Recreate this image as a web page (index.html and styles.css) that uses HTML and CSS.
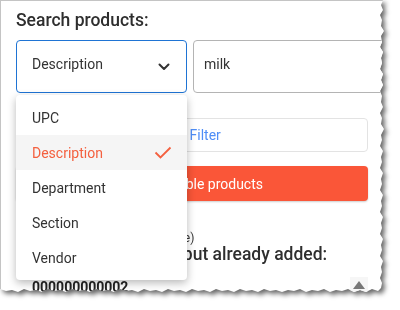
FILE: index.html
```html
<!DOCTYPE html>
<html lang="en">
<head>
    <meta charset="UTF-8">
    <meta name="viewport" content="width=device-width, initial-scale=1.0">
    <title>Search products</title>
    <link rel="stylesheet" href="styles.css">
</head>
<body>

    <div class="sheet">
        <div class="paper">
            <h2 class="title">Search products:</h2>

            <!-- Search row -->
            <div class="search-row">
                <div class="select">
                    <span>Description</span>
                    <svg class="chevron" width="12" height="8" viewBox="0 0 12 8">
                        <path d="M1.5 1.5 L6 6 L10.5 1.5" fill="none" stroke="#333" stroke-width="2" stroke-linecap="round" stroke-linejoin="round"/>
                    </svg>
                </div>
                <input class="query" type="text" value="milk">
            </div>

            <button class="filter-btn">Add Filter</button>
            <button class="add-btn">Add available products</button>

            <p class="hint">(click on each product to remove)</p>
            <h3 class="subtitle">Products were found but already added:</h3>
            <div class="upc">000000000002</div>

            <button class="to-top">
                <svg width="12" height="8" viewBox="0 0 12 8"><path d="M6 0 L12 8 L0 8 Z" fill="#777"/></svg>
            </button>

            <!-- Open dropdown -->
            <ul class="menu">
                <li>UPC</li>
                <li class="selected">Description
                    <svg width="18" height="13" viewBox="0 0 18 13">
                        <path d="M1.5 6.5 L6.5 11.5 L16.5 1.5" fill="none" stroke="#f4603f" stroke-width="1.8"/>
                    </svg>
                </li>
                <li>Department</li>
                <li>Section</li>
                <li>Vendor</li>
            </ul>
        </div>
    </div>

</body>
</html>
```

FILE: styles.css
```css
body {
    margin: 0;
    background-color: #fff;
    font-family: 'Roboto', 'Liberation Sans', sans-serif;
    color: #333;
}

.sheet {
    width: 400px;
    height: 310px;
    filter: drop-shadow(3px 3px 2.5px rgba(0, 0, 0, 0.6));
}

.paper {
    position: relative;
    width: 384px;
    height: 294px;
    box-sizing: border-box;
    background-color: #fff;
    border-top: 1px solid #c4c4c4;
    border-left: 1px solid #c4c4c4;
    padding: 9px 0 0 15px;
    overflow: hidden;
    clip-path: polygon(0 0, 383px 0, 381px 5px, 383px 10px, 380px 15px, 382px 20px, 381px 26px, 384px 31px, 381px 36px, 382px 42px, 380px 47px, 383px 52px, 381px 58px, 382px 63px, 380px 69px, 383px 74px, 381px 80px, 383px 85px, 380px 91px, 382px 96px, 381px 102px, 383px 107px, 380px 113px, 382px 118px, 381px 124px, 384px 129px, 381px 135px, 382px 140px, 380px 146px, 383px 151px, 381px 157px, 382px 162px, 380px 168px, 383px 173px, 381px 179px, 382px 184px, 380px 190px, 383px 195px, 381px 201px, 382px 206px, 380px 212px, 383px 217px, 381px 223px, 382px 228px, 380px 234px, 383px 239px, 381px 245px, 382px 250px, 380px 256px, 383px 261px, 381px 267px, 382px 272px, 380px 278px, 382px 283px, 381px 288px, 378px 291px, 372px 289px, 366px 292px, 360px 290px, 354px 292px, 348px 289px, 342px 291px, 336px 290px, 330px 292px, 324px 289px, 318px 291px, 312px 290px, 306px 292px, 300px 289px, 294px 291px, 288px 290px, 282px 292px, 276px 290px, 270px 291px, 264px 289px, 258px 292px, 252px 290px, 246px 291px, 240px 289px, 234px 292px, 228px 290px, 222px 291px, 216px 289px, 210px 292px, 204px 290px, 198px 291px, 192px 289px, 186px 292px, 180px 290px, 174px 291px, 168px 289px, 162px 292px, 156px 290px, 150px 291px, 144px 289px, 138px 292px, 132px 290px, 126px 291px, 120px 289px, 114px 292px, 108px 290px, 102px 291px, 96px 289px, 90px 292px, 84px 290px, 78px 291px, 72px 289px, 66px 292px, 60px 290px, 54px 291px, 48px 289px, 42px 292px, 36px 290px, 30px 291px, 24px 289px, 18px 292px, 12px 290px, 6px 291px, 0 289px);
}

.title {
    margin: 0 0 10px;
    font-size: 17.5px;
    line-height: 20px;
    font-weight: 500;
    color: #2e2e2e;
}

.search-row {
    display: flex;
    gap: 6px;
    width: 400px;
}

.select {
    width: 171px;
    height: 53px;
    box-sizing: border-box;
    border: 1px solid #1f74d4;
    border-radius: 4px;
    padding: 0 16px 5px 15px;
    display: flex;
    align-items: center;
    justify-content: space-between;
    font-size: 14px;
}

.chevron {
    margin-top: 5px;
}

.query {
    width: 200px;
    height: 53px;
    box-sizing: border-box;
    border: 1px solid #b4b4b4;
    border-radius: 4px;
    padding: 0 10px 5px;
    font-family: inherit;
    font-size: 14px;
    color: #333;
}

.filter-btn,
.add-btn {
    display: block;
    width: 352px;
    border-radius: 4px;
    font-family: inherit;
    font-size: 14px;
}

.filter-btn {
    margin-top: 25px;
    height: 34px;
    padding-left: 4px;
    background-color: #fff;
    border: 1px solid #e3e3e3;
    color: #4f8ef7;
}

.add-btn {
    margin-top: 14px;
    height: 35px;
    border: none;
    background-color: #fa5638;
    color: #fff;
    box-shadow: 0 1px 2px rgba(0, 0, 0, 0.2);
}

.hint {
    margin: 31px 0 0;
    font-size: 12px;
    line-height: 12px;
}

.subtitle {
    margin: 0;
    font-size: 17.5px;
    line-height: 20px;
    font-weight: 500;
    color: #2e2e2e;
}

.upc {
    margin: 15px 0 0 16px;
    font-size: 14px;
    font-weight: 700;
    color: #222;
}

.to-top {
    position: absolute;
    left: 349px;
    top: 276px;
    width: 18px;
    height: 16px;
    padding: 0;
    border: none;
    background-color: #f6f6f6;
    display: flex;
    align-items: center;
    justify-content: center;
}

.menu {
    position: absolute;
    left: 15px;
    top: 94px;
    width: 171px;
    margin: 0;
    padding: 5px 0;
    list-style: none;
    background-color: #fff;
    border-radius: 4px;
    box-shadow: 0 3px 8px rgba(0, 0, 0, 0.28);
}

.menu li {
    height: 35px;
    padding: 0 15px 0 16px;
    display: flex;
    align-items: center;
    justify-content: space-between;
    font-size: 14px;
    color: #333;
}

.menu li.selected {
    background-color: #f5f5f5;
    color: #f4603f;
}
```
